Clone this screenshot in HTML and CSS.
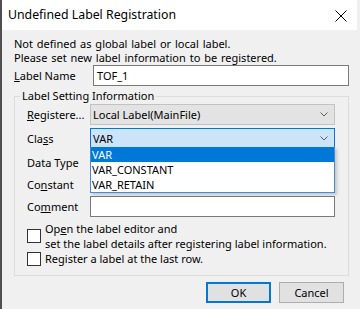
FILE: index.html
```html
<!DOCTYPE html>
<html>
<head>
<meta charset="utf-8">
<link rel="stylesheet" href="styles.css">
</head>
<body>
<div class="dialog">
  <div class="titlebar">
    <span class="title">Undefined Label Registration</span>
    <svg class="close" width="12" height="12" viewBox="0 0 12 12"><path d="M0.5 0.5L11.5 11.5M11.5 0.5L0.5 11.5" stroke="#000" stroke-width="1" fill="none"/></svg>
  </div>
  <div class="content">
    <div class="msg">
      <div>Not defined as global label or local label.</div>
      <div>Please set new label information to be registered.</div>
    </div>
    <div class="name-row">
      <span class="lbl-name"><u>L</u>abel Name</span>
      <div class="input name-input">TOF_1</div>
    </div>
    <fieldset class="group">
      <legend>Label Setting Information</legend>
      <div class="grid">
        <span class="lbl"><u>R</u>egistere...</span>
        <div class="combo combo-gray"><span>Local Label(MainFile)</span><svg class="chev" width="8" height="5" viewBox="0 0 8 5"><path d="M0.5 0.5L4 4L7.5 0.5" stroke="#606060" fill="none"/></svg></div>
        <span class="lbl">Cla<u>s</u>s</span>
        <div class="combo combo-focus"><span>VAR</span><svg class="chev" width="8" height="5" viewBox="0 0 8 5"><path d="M0.5 0.5L4 4L7.5 0.5" stroke="#606060" fill="none"/></svg>
          <ul class="dropdown">
            <li class="sel">VAR</li>
            <li>VAR_CONSTANT</li>
            <li>VAR_RETAIN</li>
          </ul>
        </div>
        <span class="lbl">Data Type</span>
        <div></div>
        <span class="lbl">Co<u>n</u>stant</span>
        <div></div>
        <span class="lbl">Co<u>m</u>ment</span>
        <div class="input comment-input"></div>
      </div>
      <div class="check check1">
        <span class="box"></span>
        <span class="ctext">Op<u>e</u>n the label editor and<br>set the label details after registering label information.</span>
      </div>
      <div class="check check2">
        <span class="box"></span>
        <span class="ctext">Re<u>g</u>ister a label at the last row.</span>
      </div>
    </fieldset>
    <div class="buttons">
      <button class="btn btn-default">OK</button>
      <button class="btn">Cancel</button>
    </div>
  </div>
</div>
</body>
</html>
```
FILE: styles.css
```css
html, body {
  margin: 0;
  padding: 0;
  background: #f0f0f0;
}
body {
  font-family: "Noto Sans", "Liberation Sans", sans-serif;
  font-size: 11px;
  color: #000;
}
.dialog {
  width: 357px;
  height: 309px;
  box-sizing: border-box;
  border-left: 2px solid #4f4f4f;
  background: #f0f0f0;
  overflow: hidden;
}
.titlebar {
  height: 30px;
  background: #fff;
  display: flex;
  align-items: center;
  justify-content: space-between;
  padding: 0 10px 0 6px;
}
.title {
  font-size: 12.3px;
  line-height: 16px;
}
.close {
  display: block;
  margin-top: 1px;
}
.content {
  padding: 7px 8px 0 12px;
}
.msg {
  line-height: 14px;
  word-spacing: 1px;
}
.name-row {
  display: flex;
  align-items: center;
  height: 21px;
}
.lbl-name {
  width: 79px;
}
.input {
  box-sizing: border-box;
  border: 1px solid #7a7a7a;
  background: #fff;
}
.name-input {
  width: 256px;
  height: 21px;
  padding-left: 3px;
  line-height: 19px;
}
.group {
  margin: 3px 0 0;
  padding: 1px 13px 9px 12px;
  border: 1px solid #dcdcdc;
  min-width: 0;
}
.group legend {
  margin-left: -7px;
  padding: 0 2px;
  line-height: 14px;
}
.grid {
  display: grid;
  grid-template-columns: 63px 245px;
  grid-template-rows: 24px 24px 22px 22px 21px;
  align-items: start;
}
.lbl {
  line-height: 21px;
  white-space: nowrap;
}
.combo {
  position: relative;
  box-sizing: border-box;
  height: 21px;
  display: flex;
  align-items: center;
  justify-content: space-between;
  padding: 0 6px 0 2px;
  border: 1px solid #adadad;
}
.combo-gray {
  background: #e3e3e3;
  border-color: #c2c2c2;
}
.combo-focus {
  height: 20px;
  background: #cce4f7;
  border-color: #0078d7;
}
.chev {
  display: block;
}
.dropdown {
  position: absolute;
  top: 100%;
  left: -1px;
  right: -1px;
  margin: 0;
  padding: 0;
  list-style: none;
  background: #fff;
  border: 1px solid #3d8ee0;
  border-top: none;
  box-shadow: 2px 2px 3px rgba(0, 0, 0, 0.18);
  z-index: 2;
}
.dropdown li {
  height: 15px;
  line-height: 15px;
  padding-left: 1px;
}
.dropdown li.sel {
  background: #0078d7;
  color: #fff;
}
.comment-input {
  height: 21px;
}
.check {
  display: flex;
  align-items: center;
  gap: 4px;
  line-height: 15px;
}
.check1 {
  margin-top: 4px;
}
.box {
  flex: none;
  width: 14px;
  height: 14px;
  box-sizing: border-box;
  border: 1px solid #333;
  background: #fff;
}
.buttons {
  display: flex;
  justify-content: flex-end;
  gap: 8px;
  margin-top: 6px;
  padding-right: 5px;
}
.btn {
  width: 65px;
  height: 21px;
  box-sizing: border-box;
  border: 1px solid #adadad;
  background: #e1e1e1;
  font-family: "Noto Sans", "Liberation Sans", sans-serif;
  font-size: 11px;
  color: #000;
  padding: 0;
  line-height: 17px;
}
.btn-default {
  border: 2px solid #0078d7;
}
```
